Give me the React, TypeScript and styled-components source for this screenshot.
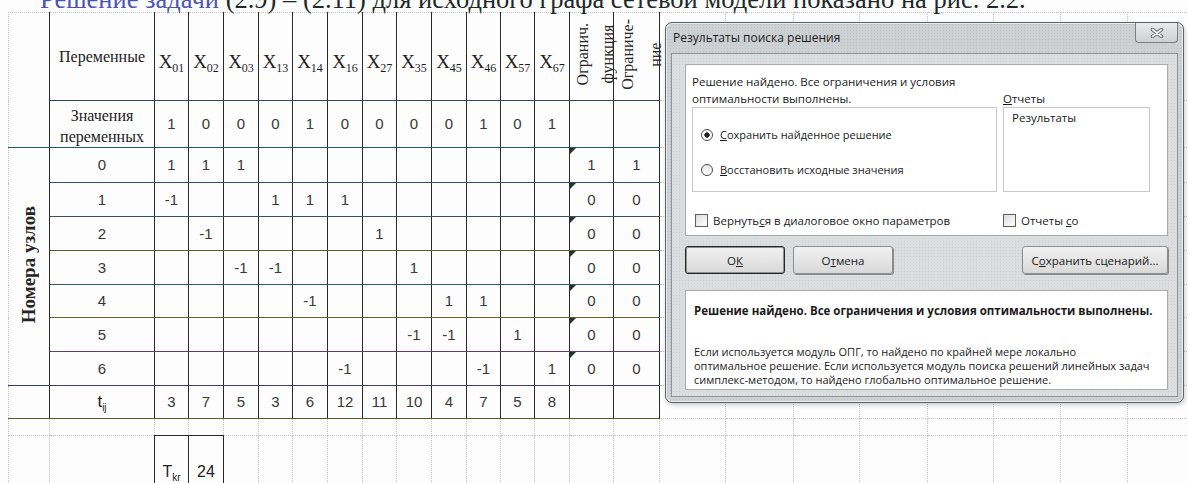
import React from "react";
import styled, { createGlobalStyle } from "styled-components";

const ink = "#2a2a2a";
const grid = "#c4c4c4";

const GlobalStyle = createGlobalStyle`
  html, body {
    margin: 0;
    padding: 0;
    background: #fdfdfd;
  }
  body {
    width: 1188px;
    height: 483px;
    overflow: hidden;
  }
`;

const Page = styled.div`
  position: relative;
  width: 1188px;
  height: 483px;
  overflow: hidden;
`;

const Caption = styled.p`
  margin: -14px 0 0 40px;
  height: 26px;
  font: 26.5px/26px "Liberation Serif", "Times New Roman", serif;
  color: #1d2a2a;
  white-space: nowrap;
`;

const CaptionLead = styled.span`
  color: #4a55b4;
`;

const SheetArea = styled.div`
  padding-left: 8px;
`;

const Sheet = styled.table`
  border-collapse: collapse;
  table-layout: fixed;
  width: 1186px;
`;

const Col = styled.col<{ $w: number }>`
  width: ${(p) => p.$w}px;
`;

const Row = styled.tr<{ $h: number }>`
  height: ${(p) => p.$h}px;
`;

const GridCell = styled.td`
  padding: 0;
  border: 1px dotted ${grid};
`;

const Box = styled.td<{ $line?: string; $open?: boolean; $closed?: boolean }>`
  padding: 0;
  border: 1px dotted ${grid};
  border-left: 1px ${(p) => (p.$open ? `dotted ${grid}` : `solid ${ink}`)};
  border-right: 1px solid ${ink};
  border-bottom: 1px solid ${(p) => p.$line ?? ink};
  ${(p) => (p.$closed ? `border-top: 1px solid ${ink};` : "")}
  text-align: center;
  vertical-align: middle;
  font: 15px/18px "Liberation Sans", Arial, sans-serif;
  color: #383838;
`;

const SerifBox = styled(Box)`
  font: 16px/21px "Liberation Serif", "Times New Roman", serif;
  color: #222;
`;

const StackedLabel = styled(SerifBox)`
  padding-top: 4px;
`;

const VarHead = styled(Box)`
  padding-top: 10px;
  font: 19px/22px "Liberation Serif", "Times New Roman", serif;
  color: #1e1e1e;
  white-space: nowrap;
`;

const FlagBox = styled(Box)`
  position: relative;
  &::before {
    content: "";
    position: absolute;
    left: 0;
    top: 0;
    border-top: 6px solid #26332a;
    border-right: 6px solid transparent;
  }
`;

const BottomBox = styled(Box)`
  vertical-align: bottom;
  padding-bottom: 3px;
  font-size: 16px;
  color: #222;
`;

const Symbol = styled.span`
  font-size: 17px;
  color: #1c1c1c;
`;

const Sub = styled.sub<{ $size?: number }>`
  font-size: ${(p) => p.$size ?? 12}px;
  vertical-align: -4px;
  line-height: 0;
`;

const Rotated = styled.div<{ $lh: number; $size: number; $bold?: boolean }>`
  display: inline-block;
  writing-mode: vertical-rl;
  transform: rotate(180deg);
  white-space: nowrap;
  text-align: center;
  font-family: "Liberation Serif", "Times New Roman", serif;
  font-size: ${(p) => p.$size}px;
  font-weight: ${(p) => (p.$bold ? 700 : 400)};
  line-height: ${(p) => p.$lh}px;
  color: #252525;
`;

/* ---------- solver dialog ---------- */

const Dialog = styled.section`
  position: absolute;
  left: 665px;
  top: 22px;
  width: 519px;
  height: 381px;
  box-sizing: border-box;
  display: flex;
  flex-direction: column;
  padding: 0 5px 5px 5px;
  border: 1px solid #5d6266;
  border-radius: 7px;
  background-color: #cdd1d4;
  background-image: radial-gradient(rgba(0, 0, 0, 0.07) 0.7px, transparent 0.9px);
  background-size: 3px 3px;
  box-shadow: inset 0 0 0 1px #eceef0, 1px 2px 4px rgba(0, 0, 0, 0.2);
  font-family: "Open Sans", "Noto Sans", sans-serif;
  color: #1b1b1b;
`;

const TitleBar = styled.header`
  height: 30px;
  display: flex;
  align-items: flex-start;
  justify-content: space-between;
`;

const Title = styled.h1`
  margin: 0;
  padding: 7px 0 0 2px;
  font-size: 12px;
  font-weight: 400;
  line-height: 16px;
`;

const CloseButton = styled.div`
  width: 43px;
  height: 20px;
  display: flex;
  align-items: center;
  justify-content: center;
  box-sizing: border-box;
  border: 1px solid #7a7e82;
  border-top: none;
  border-radius: 0 0 4px 4px;
  background: linear-gradient(#e9ebed, #cdd1d4);
`;

const Client = styled.div`
  flex: 1;
  display: flex;
  flex-direction: column;
  padding: 10px 9px 6px 13px;
  border: 1px solid #8e9296;
  background-color: #dcdddf;
  background-image: radial-gradient(rgba(0, 0, 0, 0.06) 0.7px, transparent 0.9px);
  background-size: 3px 3px;
`;

const Panel = styled.div`
  height: 172px;
  box-sizing: border-box;
  border: 1px solid #a9abad;
  background: #fff;
`;

const OptionsGrid = styled(Panel)`
  display: grid;
  grid-template-columns: 305px 147px;
  grid-template-rows: 34px 85px auto;
  column-gap: 6px;
  padding: 8px 0 0 6px;
  font-size: 11.5px;
  line-height: 17px;
`;

const Status = styled.div``;

const ReportsLabel = styled.div`
  align-self: end;
`;

const Group = styled.div`
  display: flex;
  flex-direction: column;
  gap: 18px;
  padding: 18px 0 0 8px;
  border: 1px solid #c8c8c8;
`;

const Choice = styled.div`
  display: flex;
  align-items: center;
  gap: 7px;
  font-size: 11px;
`;

const Radio = styled.span<{ $on?: boolean }>`
  width: 12px;
  height: 12px;
  box-sizing: border-box;
  border-radius: 50%;
  border: 1px solid #4d4d4d;
  background: ${(p) =>
    p.$on
      ? "radial-gradient(circle, #1f1f1f 0 2.4px, #fff 2.9px)"
      : "linear-gradient(#e6e6e6, #fff)"};
`;

const ListBox = styled.div`
  padding: 1px 8px;
  border: 1px solid #c8c8c8;
`;

const Check = styled.div<{ $indent?: number }>`
  display: flex;
  align-items: center;
  gap: 5px;
  margin: 14px 0 0 ${(p) => p.$indent ?? 0}px;
`;

const CheckBox = styled.span`
  width: 13px;
  height: 13px;
  box-sizing: border-box;
  border: 1px solid #5e5e5e;
  background: linear-gradient(135deg, #dcdcdc, #fff);
`;

const Key = styled.span`
  text-decoration: underline;
`;

const Buttons = styled.div`
  display: flex;
  gap: 8px;
  margin-top: 10px;
`;

const Button = styled.div<{ $w: number; $primary?: boolean; $push?: boolean }>`
  width: ${(p) => p.$w}px;
  height: 28px;
  box-sizing: border-box;
  display: flex;
  align-items: center;
  justify-content: center;
  margin-left: ${(p) => (p.$push ? "auto" : "0")};
  border: 1px solid ${(p) => (p.$primary ? "#262626" : "#8c8c8c")};
  border-radius: 3px;
  background: linear-gradient(#f1f1f1, #d9d9d9);
  box-shadow: ${(p) =>
    p.$primary ? "inset 0 0 0 1px #8f8f8f" : "1px 1px 0 #8a8a8a"};
  font-size: 11.5px;
`;

const Message = styled.div`
  flex: 1;
  margin-top: 16px;
  padding: 12px 10px 0 8px;
  border: 1px solid #a9abad;
  background: #fff;
`;

const MessageHead = styled.div`
  font-size: 11.5px;
  font-weight: 700;
  line-height: 16px;
`;

const MessageBody = styled.p`
  margin: 26px 0 0;
  font-size: 11px;
  line-height: 14px;
`;

const CloseGlyph = () => (
  <svg width="14" height="10" viewBox="0 0 14 10">
    <path d="M2.5 1.5 L11.5 8.5 M11.5 1.5 L2.5 8.5" stroke="#6a6e72" strokeWidth="3.6" strokeLinecap="round" />
    <path d="M2.5 1.5 L11.5 8.5 M11.5 1.5 L2.5 8.5" stroke="#f6f6f6" strokeWidth="1.6" strokeLinecap="round" />
  </svg>
);

/* ---------- data ---------- */

const widths = [
  41, 105, 34, 35, 35, 34, 35, 35, 34, 35, 35, 34, 34, 35, 44, 46, 66, 68, 66, 68, 66, 67, 67, 67,
];
const spareCols = 8;

const arcs = ["01", "02", "03", "13", "14", "16", "27", "35", "45", "46", "57", "67"];
const solution = [1, 0, 0, 0, 1, 0, 0, 0, 0, 1, 0, 1];
const durations = [3, 7, 5, 3, 6, 12, 11, 10, 4, 7, 5, 8];

type Node = { id: number; cells: Record<number, number>; lhs: number; rhs: number; line: string; h: number };

const nodes: Node[] = [
  { id: 0, cells: { 0: 1, 1: 1, 2: 1 }, lhs: 1, rhs: 1, line: "#2f4e78", h: 35 },
  { id: 1, cells: { 0: -1, 3: 1, 4: 1, 5: 1 }, lhs: 0, rhs: 0, line: "#3b4e6a", h: 34 },
  { id: 2, cells: { 1: -1, 6: 1 }, lhs: 0, rhs: 0, line: "#5a5e30", h: 34 },
  { id: 3, cells: { 2: -1, 3: -1, 7: 1 }, lhs: 0, rhs: 0, line: "#2e5a6c", h: 34 },
  { id: 4, cells: { 4: -1, 8: 1, 9: 1 }, lhs: 0, rhs: 0, line: "#63632c", h: 33 },
  { id: 5, cells: { 7: -1, 8: -1, 10: 1 }, lhs: 0, rhs: 0, line: "#623878", h: 34 },
  { id: 6, cells: { 5: -1, 9: -1, 11: 1 }, lhs: 0, rhs: 0, line: "#3c3e66", h: 34 },
];

const spares = (n: number, prefix: string) =>
  Array.from({ length: n }, (_, i) => <GridCell key={`${prefix}${i}`} />);

export default function App() {
  return (
    <Page>
      <GlobalStyle />
      <Caption>
        <CaptionLead>Решение задачи</CaptionLead> (2.9) – (2.11) для исходного графа сетевой модели показано на рис. 2.2.
      </Caption>

      <SheetArea>
        <Sheet>
          <colgroup>
            {widths.map((w, i) => (
              <Col key={i} $w={w} />
            ))}
          </colgroup>
          <tbody>
            <Row $h={88}>
              <Box rowSpan={2} $open $line="#245a66" />
              <SerifBox $line="#2b4a58">Переменные</SerifBox>
              {arcs.map((a) => (
                <VarHead key={a} $line="#2b4a58">
                  X<Sub>{a}</Sub>
                </VarHead>
              ))}
              <Box $line="#2b4a58">
                <Rotated $lh={25} $size={16}>
                  Огранич.
                  <br />
                  функция
                </Rotated>
              </Box>
              <Box $line="#2b4a58">
                <Rotated $lh={28} $size={16}>
                  Ограниче-
                  <br />
                  ние
                </Rotated>
              </Box>
              {spares(spareCols, "h")}
            </Row>

            <Row $h={46}>
              <StackedLabel $line="#245a66">
                Значения
                <br />
                переменных
              </StackedLabel>
              {solution.map((v, i) => (
                <Box key={i} $line="#245a66">
                  {v}
                </Box>
              ))}
              <Box $line="#245a66" />
              <Box $line="#245a66" />
              {spares(spareCols, "v")}
            </Row>

            {nodes.map((n) => (
              <Row key={n.id} $h={n.h}>
                {n.id === 0 && (
                  <Box rowSpan={nodes.length} $open $line="#34406a">
                    <Rotated $lh={22} $size={19} $bold>
                      Номера узлов
                    </Rotated>
                  </Box>
                )}
                <Box $line={n.line}>{n.id}</Box>
                {arcs.map((a, i) => (
                  <Box key={a} $line={n.line}>
                    {n.cells[i] ?? ""}
                  </Box>
                ))}
                <FlagBox $line={n.line}>{n.lhs}</FlagBox>
                <Box $line={n.line}>{n.rhs}</Box>
                {spares(spareCols, `n${n.id}-`)}
              </Row>
            ))}

            <Row $h={33}>
              <Box $open $line="#4b642e" />
              <Box $line="#4b642e">
                <Symbol>
                  t<Sub $size={10}>ij</Sub>
                </Symbol>
              </Box>
              {durations.map((d, i) => (
                <Box key={i} $line="#4b642e">
                  {d}
                </Box>
              ))}
              <Box $line="#4b642e" />
              <Box $line="#4b642e" />
              {spares(spareCols, "t")}
            </Row>

            <Row $h={17}>{spares(widths.length, "s")}</Row>

            <Row $h={49}>
              {spares(2, "k")}
              <BottomBox $closed>
                T<Sub $size={10}>kr</Sub>
              </BottomBox>
              <BottomBox $closed>24</BottomBox>
              {spares(widths.length - 4, "kk")}
            </Row>
          </tbody>
        </Sheet>
      </SheetArea>

      <Dialog>
        <TitleBar>
          <Title>Результаты поиска решения</Title>
          <CloseButton>
            <CloseGlyph />
          </CloseButton>
        </TitleBar>
        <Client>
          <OptionsGrid>
            <Status>
              Решение найдено. Все ограничения и условия
              <br />
              оптимальности выполнены.
            </Status>
            <ReportsLabel>
              <Key>О</Key>тчеты
            </ReportsLabel>
            <Group>
              <Choice>
                <Radio $on />
                <span>
                  <Key>С</Key>охранить найденное решение
                </span>
              </Choice>
              <Choice>
                <Radio />
                <span>
                  <Key>В</Key>осстановить исходные значения
                </span>
              </Choice>
            </Group>
            <ListBox>Результаты</ListBox>
            <Check $indent={3}>
              <CheckBox />
              <span>
                Вернуть<Key>с</Key>я в диалоговое окно параметров
              </span>
            </Check>
            <Check>
              <CheckBox />
              <span>
                Отчеты <Key>с</Key>о
              </span>
            </Check>
          </OptionsGrid>

          <Buttons>
            <Button $w={100} $primary>
              <span>
                О<Key>К</Key>
              </span>
            </Button>
            <Button $w={100}>
              <span>
                О<Key>т</Key>мена
              </span>
            </Button>
            <Button $w={146} $push>
              <span>
                С<Key>о</Key>хранить сценарий...
              </span>
            </Button>
          </Buttons>

          <Message>
            <MessageHead>Решение найдено. Все ограничения и условия оптимальности выполнены.</MessageHead>
            <MessageBody>
              Если используется модуль ОПГ, то найдено по крайней мере локально
              <br />
              оптимальное решение. Если используется модуль поиска решений линейных задач
              <br />
              симплекс-методом, то найдено глобально оптимальное решение.
            </MessageBody>
          </Message>
        </Client>
      </Dialog>
    </Page>
  );
}
